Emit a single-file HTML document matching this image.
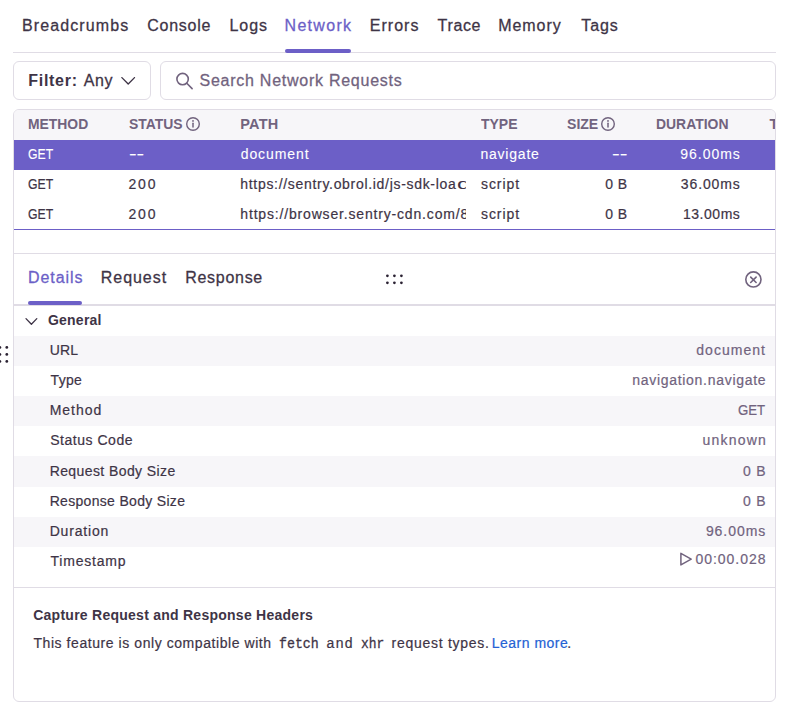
<!DOCTYPE html>
<html lang="en"><head><meta charset="utf-8"><title>Replay Network</title>
<style>
html,body{margin:0;padding:0;background:#fff;}
body{width:795px;height:713px;position:relative;overflow:hidden;font-family:"Liberation Sans",sans-serif;}
.t{position:absolute;white-space:pre;line-height:20px;height:20px;}
.r{position:absolute;}
.box{position:absolute;box-sizing:border-box;border:1px solid #E0DCE5;border-radius:6px;background:#fff;}
.panel{position:absolute;box-sizing:border-box;border:1px solid #E0DCE5;border-radius:6px;background:#fff;}
</style></head><body>
<span class="t" style="left:22.05px;top:15.00px;line-height:21px;height:21px;font-size:16px;letter-spacing:1.104px;color:#3E3446;-webkit-text-stroke:0.28px;">Breadcrumbs</span>
<span class="t" style="left:147.35px;top:15.00px;line-height:21px;height:21px;font-size:16px;letter-spacing:0.725px;color:#3E3446;-webkit-text-stroke:0.28px;">Console</span>
<span class="t" style="left:229.45px;top:15.00px;line-height:21px;height:21px;font-size:16px;letter-spacing:0.972px;color:#3E3446;-webkit-text-stroke:0.28px;">Logs</span>
<span class="t" style="left:284.55px;top:15.00px;line-height:21px;height:21px;font-size:16px;letter-spacing:1.303px;color:#6C5FC7;-webkit-text-stroke:0.28px;">Network</span>
<span class="t" style="left:369.85px;top:15.00px;line-height:21px;height:21px;font-size:16px;letter-spacing:1.013px;color:#3E3446;-webkit-text-stroke:0.28px;">Errors</span>
<span class="t" style="left:437.62px;top:15.00px;line-height:21px;height:21px;font-size:16px;letter-spacing:0.636px;color:#3E3446;-webkit-text-stroke:0.28px;">Trace</span>
<span class="t" style="left:498.25px;top:15.00px;line-height:21px;height:21px;font-size:16px;letter-spacing:0.940px;color:#3E3446;-webkit-text-stroke:0.28px;">Memory</span>
<span class="t" style="left:581.23px;top:15.00px;line-height:21px;height:21px;font-size:16px;letter-spacing:0.917px;color:#3E3446;-webkit-text-stroke:0.28px;">Tags</span>
<div class="r" style="left:13px;top:52px;width:763px;height:1px;background:#E0DCE5;"></div>
<div class="r" style="left:285px;top:49px;width:66px;height:4px;background:#6C5FC7;border-radius:2px;"></div>
<div class="box" style="left:13px;top:61px;width:138px;height:39px;"></div>
<div class="box" style="left:160px;top:61px;width:616px;height:39px;"></div>
<span class="t" style="left:28.20px;top:70.00px;line-height:21px;height:21px;font-size:16px;letter-spacing:0.736px;color:#3E3446;font-weight:700;">Filter:</span>
<span class="t" style="left:83.80px;top:70.00px;line-height:21px;height:21px;font-size:16px;letter-spacing:0.534px;color:#3E3446;-webkit-text-stroke:0.28px;">Any</span>
<svg class="r" style="left:119px;top:73px" width="18" height="16" viewBox="0 0 18 16"><path d="M2.9 4.6 L9.2 11 L15.5 4.6" fill="none" stroke="#3E3446" stroke-width="1.35" stroke-linecap="round" stroke-linejoin="round"/></svg>
<svg class="r" style="left:174px;top:71px" width="22" height="20" viewBox="0 0 22 20"><circle cx="8.6" cy="8.1" r="5.7" fill="none" stroke="#71637E" stroke-width="1.6"/><path d="M12.8 12.3 L18.1 17.6" stroke="#71637E" stroke-width="1.6" stroke-linecap="round"/></svg>
<span class="t" style="left:199.55px;top:70.00px;line-height:21px;height:21px;font-size:16px;letter-spacing:0.741px;color:#71637E;-webkit-text-stroke:0.28px;">Search Network Requests</span>
<div class="panel" style="left:13px;top:109px;width:763px;height:593px;">
</div>
<div class="r" style="left:14px;top:110px;width:761px;height:30px;background:#F7F6F9;border-radius:5px 5px 0 0;"></div>
<span class="t" style="left:28.04px;top:114.00px;line-height:20px;height:20px;font-size:14.5px;letter-spacing:0.000px;color:#71637E;font-weight:700;transform:scaleX(0.9581);transform-origin:0 0;">METHOD</span>
<span class="t" style="left:129.44px;top:114.00px;line-height:20px;height:20px;font-size:14.5px;letter-spacing:0.000px;color:#71637E;font-weight:700;transform:scaleX(0.9602);transform-origin:0 0;">STATUS</span>
<span class="t" style="left:240.30px;top:114.00px;line-height:20px;height:20px;font-size:14.5px;letter-spacing:0.172px;color:#71637E;font-weight:700;">PATH</span>
<span class="t" style="left:481.18px;top:114.00px;line-height:20px;height:20px;font-size:14.5px;letter-spacing:0.000px;color:#71637E;font-weight:700;transform:scaleX(0.9637);transform-origin:0 0;">TYPE</span>
<span class="t" style="left:567.14px;top:114.00px;line-height:20px;height:20px;font-size:14.5px;letter-spacing:0.000px;color:#71637E;font-weight:700;transform:scaleX(0.9695);transform-origin:0 0;">SIZE</span>
<span class="t" style="left:655.64px;top:114.00px;line-height:20px;height:20px;font-size:14.5px;letter-spacing:0.000px;color:#71637E;font-weight:700;transform:scaleX(0.9604);transform-origin:0 0;">DURATION</span>
<div class="r" style="left:760px;top:110px;width:15px;height:30px;overflow:hidden">
<span class="t" style="left:9.57px;top:4.00px;line-height:20px;height:20px;font-size:14.5px;letter-spacing:0.297px;color:#71637E;font-weight:700;">TIMESTAMP</span>
</div>
<svg class="r" style="left:185px;top:116.1px" width="16" height="16" viewBox="0 0 16 16"><circle cx="8" cy="8" r="6.3" fill="none" stroke="#71637E" stroke-width="1.4"/><circle cx="8" cy="4.9" r="0.95" fill="#71637E"/><path d="M8 7.3 V11.1" stroke="#71637E" stroke-width="1.5" stroke-linecap="round"/></svg>
<svg class="r" style="left:600px;top:116.1px" width="16" height="16" viewBox="0 0 16 16"><circle cx="8" cy="8" r="6.3" fill="none" stroke="#71637E" stroke-width="1.4"/><circle cx="8" cy="4.9" r="0.95" fill="#71637E"/><path d="M8 7.3 V11.1" stroke="#71637E" stroke-width="1.5" stroke-linecap="round"/></svg>
<div class="r" style="left:14px;top:140px;width:761px;height:30px;background:#6C5FC7;"></div>
<span class="t" style="left:28.34px;top:144.00px;line-height:20px;height:20px;font-size:14px;letter-spacing:0.000px;color:#FFFFFF;-webkit-text-stroke:0.1px;transform:scaleX(0.8757);transform-origin:0 0;">GET</span>
<span class="t" style="left:128.68px;top:144.00px;line-height:20px;height:20px;font-size:14px;letter-spacing:0.000px;color:#FFFFFF;-webkit-text-stroke:0.1px;transform:scaleX(1.6242);transform-origin:0 0;">--</span>
<span class="t" style="left:240.68px;top:144.00px;line-height:20px;height:20px;font-size:14px;letter-spacing:0.936px;color:#FFFFFF;-webkit-text-stroke:0.1px;">document</span>
<span class="t" style="left:480.43px;top:144.00px;line-height:20px;height:20px;font-size:14px;letter-spacing:0.789px;color:#FFFFFF;-webkit-text-stroke:0.1px;">navigate</span>
<span class="t" style="left:612.07px;top:144.00px;line-height:20px;height:20px;font-size:14px;letter-spacing:0.000px;color:#FFFFFF;-webkit-text-stroke:0.1px;transform:scaleX(1.6492);transform-origin:0 0;">--</span>
<span class="t" style="left:680.27px;top:144.00px;line-height:20px;height:20px;font-size:14px;letter-spacing:0.979px;color:#FFFFFF;-webkit-text-stroke:0.1px;">96.00ms</span>
<span class="t" style="left:28.34px;top:174.00px;line-height:20px;height:20px;font-size:14px;letter-spacing:0.000px;color:#3E3446;-webkit-text-stroke:0.2px;transform:scaleX(0.8757);transform-origin:0 0;">GET</span>
<span class="t" style="left:128.55px;top:174.00px;line-height:20px;height:20px;font-size:14px;letter-spacing:1.788px;color:#3E3446;-webkit-text-stroke:0.2px;">200</span>
<div class="r" style="left:235px;top:169px;width:230.5px;height:30px;overflow:hidden">
<span class="t" style="left:5.30px;top:5.00px;line-height:20px;height:20px;font-size:14px;letter-spacing:0.690px;color:#3E3446;-webkit-text-stroke:0.2px;">https://sentry.obrol.id/js-sdk-loa<span style="display:inline-block;transform:scaleX(1.72);transform-origin:0 0;margin-left:0.4px;-webkit-text-stroke:0">der/</span></span>
</div>
<span class="t" style="left:480.93px;top:174.00px;line-height:20px;height:20px;font-size:14px;letter-spacing:0.965px;color:#3E3446;-webkit-text-stroke:0.2px;">script</span>
<span class="t" style="left:605.30px;top:174.00px;line-height:20px;height:20px;font-size:14px;letter-spacing:0.375px;color:#3E3446;-webkit-text-stroke:0.2px;">0 B</span>
<span class="t" style="left:680.80px;top:174.00px;line-height:20px;height:20px;font-size:14px;letter-spacing:0.891px;color:#3E3446;-webkit-text-stroke:0.2px;">36.00ms</span>
<span class="t" style="left:28.34px;top:204.00px;line-height:20px;height:20px;font-size:14px;letter-spacing:0.000px;color:#3E3446;-webkit-text-stroke:0.2px;transform:scaleX(0.8757);transform-origin:0 0;">GET</span>
<span class="t" style="left:128.55px;top:204.00px;line-height:20px;height:20px;font-size:14px;letter-spacing:1.788px;color:#3E3446;-webkit-text-stroke:0.2px;">200</span>
<div class="r" style="left:235px;top:199px;width:230.5px;height:30px;overflow:hidden">
<span class="t" style="left:5.30px;top:5.00px;line-height:20px;height:20px;font-size:14px;letter-spacing:0.827px;color:#3E3446;-webkit-text-stroke:0.2px;">https://browser.sentry-cdn.com/8.55.0/bundle</span>
</div>
<span class="t" style="left:480.93px;top:204.00px;line-height:20px;height:20px;font-size:14px;letter-spacing:0.965px;color:#3E3446;-webkit-text-stroke:0.2px;">script</span>
<span class="t" style="left:605.30px;top:204.00px;line-height:20px;height:20px;font-size:14px;letter-spacing:0.375px;color:#3E3446;-webkit-text-stroke:0.2px;">0 B</span>
<span class="t" style="left:682.90px;top:204.00px;line-height:20px;height:20px;font-size:14px;letter-spacing:0.541px;color:#3E3446;-webkit-text-stroke:0.2px;">13.00ms</span>
<div class="r" style="left:14px;top:229px;width:761px;height:1px;background:#6C5FC7;"></div>
<div class="r" style="left:14px;top:253px;width:761px;height:1px;background:#E0DCE5;"></div>
<span class="t" style="left:27.95px;top:267.00px;line-height:21px;height:21px;font-size:16px;letter-spacing:0.933px;color:#6C5FC7;-webkit-text-stroke:0.28px;">Details</span>
<span class="t" style="left:100.85px;top:267.00px;line-height:21px;height:21px;font-size:16px;letter-spacing:0.942px;color:#3E3446;-webkit-text-stroke:0.28px;">Request</span>
<span class="t" style="left:185.15px;top:267.00px;line-height:21px;height:21px;font-size:16px;letter-spacing:0.725px;color:#3E3446;-webkit-text-stroke:0.28px;">Response</span>
<div class="r" style="left:14px;top:304px;width:761px;height:2px;background:#E0DCE5;"></div>
<div class="r" style="left:28px;top:301px;width:54px;height:4px;background:#6C5FC7;border-radius:2px;"></div>
<svg class="r" style="left:380px;top:270px" width="30" height="20" fill="#2B2233"><circle cx="7.4" cy="5.8" r="1.38"/><circle cx="7.4" cy="12.8" r="1.38"/><circle cx="14.4" cy="5.8" r="1.38"/><circle cx="14.4" cy="12.8" r="1.38"/><circle cx="21.4" cy="5.8" r="1.38"/><circle cx="21.4" cy="12.8" r="1.38"/></svg>
<svg class="r" style="left:0px;top:340px" width="12" height="30" fill="#2B2233"><circle cx="-0.1" cy="7.4" r="1.4"/><circle cx="-0.1" cy="14.4" r="1.4"/><circle cx="-0.1" cy="21.4" r="1.4"/><circle cx="6.8" cy="7.4" r="1.4"/><circle cx="6.8" cy="14.4" r="1.4"/><circle cx="6.8" cy="21.4" r="1.4"/></svg>
<svg class="r" style="left:743px;top:269px" width="21" height="21" viewBox="0 0 21 21"><circle cx="10.4" cy="10.45" r="7.6" fill="none" stroke="#71637E" stroke-width="1.6"/><path d="M7.7 8.1 L13.1 13.5 M13.1 8.1 L7.7 13.5" stroke="#71637E" stroke-width="1.6" stroke-linecap="round"/></svg>
<svg class="r" style="left:23px;top:313px" width="18" height="16" viewBox="0 0 18 16"><path d="M3 5.6 L8.4 11.2 L13.8 5.6" fill="none" stroke="#3E3446" stroke-width="1.3" stroke-linecap="round" stroke-linejoin="round"/></svg>
<span class="t" style="left:47.90px;top:310.00px;line-height:20px;height:20px;font-size:14px;letter-spacing:0.246px;color:#3E3446;font-weight:700;">General</span>
<div class="r" style="left:14px;top:336px;width:761px;height:30px;background:#F7F6F9;"></div>
<div class="r" style="left:14px;top:396px;width:761px;height:30px;background:#F7F6F9;"></div>
<div class="r" style="left:14px;top:456px;width:761px;height:31px;background:#F7F6F9;"></div>
<div class="r" style="left:14px;top:517px;width:761px;height:30px;background:#F7F6F9;"></div>
<span class="t" style="left:49.67px;top:340.00px;line-height:20px;height:20px;font-size:14px;letter-spacing:0.197px;color:#3E3446;-webkit-text-stroke:0.2px;">URL</span>
<span class="t" style="left:696.27px;top:340.00px;line-height:20px;height:20px;font-size:14px;letter-spacing:1.036px;color:#71637E;-webkit-text-stroke:0.2px;">document</span>
<span class="t" style="left:50.55px;top:370.00px;line-height:20px;height:20px;font-size:14px;letter-spacing:0.299px;color:#3E3446;-webkit-text-stroke:0.2px;">Type</span>
<span class="t" style="left:632.23px;top:370.00px;line-height:20px;height:20px;font-size:14px;letter-spacing:0.705px;color:#71637E;-webkit-text-stroke:0.2px;">navigation.navigate</span>
<span class="t" style="left:49.67px;top:400.00px;line-height:20px;height:20px;font-size:14px;letter-spacing:0.995px;color:#3E3446;-webkit-text-stroke:0.2px;">Method</span>
<span class="t" style="left:737.99px;top:400.00px;line-height:20px;height:20px;font-size:14px;letter-spacing:0.000px;color:#71637E;-webkit-text-stroke:0.2px;transform:scaleX(0.9441);transform-origin:0 0;">GET</span>
<span class="t" style="left:50.17px;top:430.00px;line-height:20px;height:20px;font-size:14px;letter-spacing:0.534px;color:#3E3446;-webkit-text-stroke:0.2px;">Status Code</span>
<span class="t" style="left:702.62px;top:430.00px;line-height:20px;height:20px;font-size:14px;letter-spacing:1.192px;color:#71637E;-webkit-text-stroke:0.2px;">unknown</span>
<span class="t" style="left:49.67px;top:461.00px;line-height:20px;height:20px;font-size:14px;letter-spacing:0.409px;color:#3E3446;-webkit-text-stroke:0.2px;">Request Body Size</span>
<span class="t" style="left:743.10px;top:461.00px;line-height:20px;height:20px;font-size:14px;letter-spacing:0.775px;color:#71637E;-webkit-text-stroke:0.2px;">0 B</span>
<span class="t" style="left:49.67px;top:491.00px;line-height:20px;height:20px;font-size:14px;letter-spacing:0.315px;color:#3E3446;-webkit-text-stroke:0.2px;">Response Body Size</span>
<span class="t" style="left:743.10px;top:491.00px;line-height:20px;height:20px;font-size:14px;letter-spacing:0.775px;color:#71637E;-webkit-text-stroke:0.2px;">0 B</span>
<span class="t" style="left:49.67px;top:521.00px;line-height:20px;height:20px;font-size:14px;letter-spacing:0.832px;color:#3E3446;-webkit-text-stroke:0.2px;">Duration</span>
<span class="t" style="left:705.88px;top:521.00px;line-height:20px;height:20px;font-size:14px;letter-spacing:0.962px;color:#71637E;-webkit-text-stroke:0.2px;">96.00ms</span>
<span class="t" style="left:50.55px;top:551.00px;line-height:20px;height:20px;font-size:14px;letter-spacing:0.778px;color:#3E3446;-webkit-text-stroke:0.2px;">Timestamp</span>
<span class="t" style="left:695.50px;top:549.00px;line-height:20px;height:20px;font-size:14px;letter-spacing:0.956px;color:#71637E;-webkit-text-stroke:0.2px;">00:00.028</span>
<svg class="r" style="left:678px;top:550px" width="18" height="18" viewBox="0 0 18 18"><path d="M2.9 3.3 L13.2 9.1 L2.9 14.9 Z" fill="none" stroke="#71637E" stroke-width="1.5" stroke-linejoin="round"/></svg>
<div class="r" style="left:14px;top:587px;width:761px;height:1px;background:#E0DCE5;"></div>
<span class="t" style="left:33.20px;top:605.00px;line-height:20px;height:20px;font-size:14px;letter-spacing:0.256px;color:#3E3446;font-weight:700;">Capture Request and Response Headers</span>
<span class="t" style="left:33.45px;top:633.00px;line-height:20px;height:20px;font-size:14px;letter-spacing:0.565px;color:#3E3446;-webkit-text-stroke:0.2px;">This feature is only compatible with</span>
<span class="t" style="left:279.49px;top:633.81px;line-height:20px;height:20px;font-size:14.6px;letter-spacing:0.000px;color:#3E3446;-webkit-text-stroke:0.3px;font-family:'Liberation Mono',monospace;transform:scaleX(0.9087);transform-origin:0 0;">fetch</span>
<span class="t" style="left:326.57px;top:633.00px;line-height:20px;height:20px;font-size:14px;letter-spacing:1.313px;color:#3E3446;-webkit-text-stroke:0.2px;">and</span>
<span class="t" style="left:360.83px;top:633.81px;line-height:20px;height:20px;font-size:14.6px;letter-spacing:0.000px;color:#3E3446;-webkit-text-stroke:0.3px;font-family:'Liberation Mono',monospace;transform:scaleX(0.8867);transform-origin:0 0;">xhr</span>
<span class="t" style="left:391.62px;top:633.00px;line-height:20px;height:20px;font-size:14px;letter-spacing:0.712px;color:#3E3446;-webkit-text-stroke:0.2px;">request types.</span>
<span class="t" style="left:491.68px;top:633.00px;line-height:20px;height:20px;font-size:14px;letter-spacing:0.503px;color:#2562D4;-webkit-text-stroke:0.2px;">Learn more</span>
<span class="t" style="left:567.35px;top:633.00px;line-height:20px;height:20px;font-size:14px;letter-spacing:0.000px;color:#3E3446;-webkit-text-stroke:0.2px;">.</span>
</body></html>
